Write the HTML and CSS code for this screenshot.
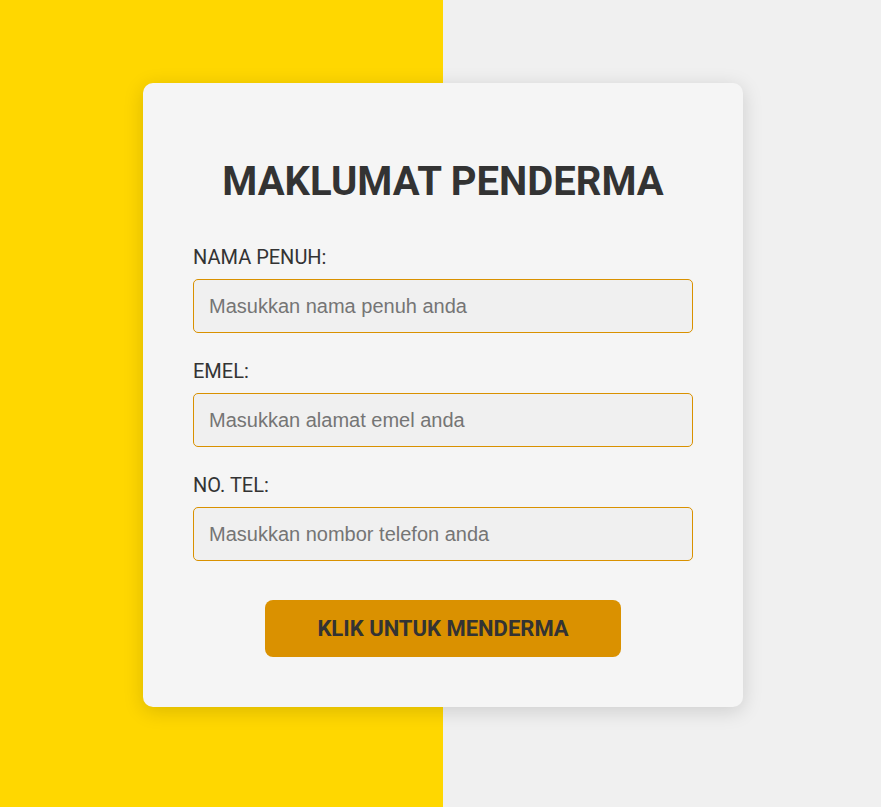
FILE: index.html
```html
<!DOCTYPE html>
<html lang="ms">
<head>
    <meta charset="UTF-8">
    <meta name="viewport" content="width=device-width, initial-scale=1.0">
    <title>Maklumat Penderma</title>
    <link rel="stylesheet" href="styles.css">
</head>
<body>

    <div class="card">
        <h1>MAKLUMAT PENDERMA</h1>
        <form class="donor-form">
            <div class="field">
                <label for="nama">NAMA PENUH:</label>
                <input type="text" id="nama" placeholder="Masukkan nama penuh anda">
            </div>
            <div class="field">
                <label for="emel">EMEL:</label>
                <input type="email" id="emel" placeholder="Masukkan alamat emel anda">
            </div>
            <div class="field">
                <label for="tel">NO. TEL:</label>
                <input type="tel" id="tel" placeholder="Masukkan nombor telefon anda">
            </div>
            <button type="button" class="submit-btn">KLIK UNTUK MENDERMA</button>
        </form>
    </div>

</body>
</html>
```

FILE: styles.css
```css
* {
    margin: 0;
    padding: 0;
    box-sizing: border-box;
}
body {
    font-family: Roboto, "Liberation Sans", sans-serif;
    color: #333;
    min-height: 100vh;
    background: linear-gradient(to right, #ffd700 0, #ffd700 443px, #f0f0f0 443px);
    padding-top: 83px;
}
.card {
    width: 600px;
    margin-left: 143px;
    background: #f5f5f5;
    border-radius: 10px;
    padding: 50px;
    box-shadow: 0 4px 20px rgba(0, 0, 0, 0.15);
}
h1 {
    font-size: 40px;
    line-height: 48px;
    font-weight: 700;
    text-align: center;
    margin-top: 25px;
    margin-bottom: 39px;
}
.donor-form {
    display: flex;
    flex-direction: column;
}
.field {
    display: flex;
    flex-direction: column;
    gap: 10px;
    margin-bottom: 26px;
}
label {
    font-size: 20px;
    line-height: 24px;
}
input {
    height: 54px;
    padding: 0 15px;
    font-family: "Liberation Sans", Arial, sans-serif;
    font-size: 20px;
    border: 1px solid #d99100;
    border-radius: 5px;
    background: #f0f0f0;
    color: #333;
}
input::placeholder {
    color: #757575;
}
.submit-btn {
    align-self: center;
    width: 356px;
    height: 57px;
    margin-top: 13px;
    border: none;
    border-radius: 8px;
    background: #da9100;
    color: #333;
    font-family: Roboto, sans-serif;
    font-size: 22px;
    font-weight: 700;
    cursor: pointer;
}
```
